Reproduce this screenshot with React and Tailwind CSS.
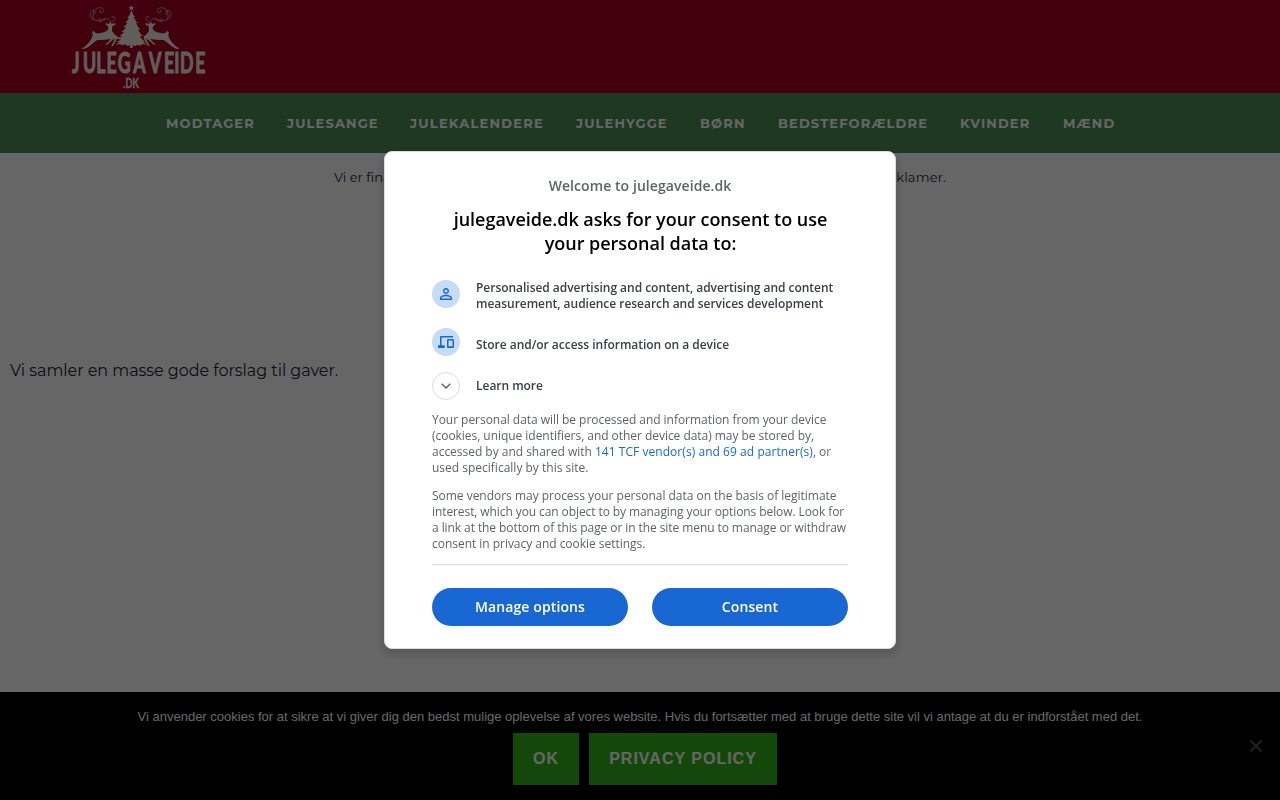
// src/App.jsx
import { MdPersonOutline } from 'react-icons/md';

const navItems = [
  { label: 'MODTAGER', className: 'w-[89px]' },
  { label: 'JULESANGE', className: 'w-[91px]' },
  { label: 'JULEKALENDERE', className: 'w-[134px] tracking-[1.25px]' },
  { label: 'JULEHYGGE', className: 'w-[92px]' },
  { label: 'BØRN', className: 'w-[46px]' },
  { label: 'BEDSTEFORÆLDRE', className: 'w-[150px]' },
  { label: 'KVINDER', className: 'w-[71px]' },
  { label: 'MÆND', className: 'w-[51px]' },
];

const Deer = () => (
  <>
    <path
      d="M138 69 L146 72 L150 67 L155 71 L167 70 L166 75 L157 78 L156 94 C162 99 166 107 173 110 C171 118 163 130 159 138 L154 139 C158 130 163 122 164 115 C158 120 147 129 141 135 L136 133 C143 127 150 121 152 116 C141 119 124 120 112 120 C102 125 96 134 86 140 C79 144 73 147 66 147 L67 144 C77 140 82 132 88 126 C94 118 98 111 98 102 L96 97 L101 92 C105 100 112 101 124 98 C137 96 146 92 145 80 L137 73 Z"
      fill="currentColor"
    />
    <path
      d="M151 68 C151 60 145 54 137 56 C130 58 126 66 120 65 C112 64 117 53 123 57 M137 57 C123 63 101 64 93 53 C86 43 92 31 101 32 C110 34 106 46 99 41 M101 58 C94 39 103 24 118 23 C133 23 134 38 124 38 C117 37 118 30 123 31 M153 67 C157 66 166 63 165 54 C163 45 153 49 157 55"
      fill="none"
      stroke="currentColor"
      strokeWidth="2.5"
      strokeOpacity="0.7"
    />
  </>
);

const Logo = () => (
  <svg viewBox="0 0 480 285" className="h-[95px] w-40 shrink-0 text-[#f0ebe1]">
    <Deer />
    <g transform="translate(423 0) scale(-1 1)">
      <Deer />
    </g>
    <path
      d="M214 15 L216 21 L222 21 L218 25 L220 31 L214 28 L208 31 L210 25 L206 21 L212 21 Z M214 30 L220 45 L225 50 L221 52 L229 65 L234 68 L228 70 L237 85 L242 88 L234 90 L244 104 L250 107 L239 109 L255 126 L250 126 L261 135 L247 132 L242 137 L233 134 L225 139 L218 136 L218 144 L210 144 L210 136 L203 138 L195 133 L186 136 L178 132 L166 134 L178 126 L168 126 L183 119 L170 116 L169 112 L188 112 L180 108 L192 97 L185 96 L198 83 L191 82 L203 69 L196 68 L207 56 L202 54 L209 45 Z"
      fill="currentColor"
    />
    <text
      x="58 111 175 225 280 354 431 503 553 581 654"
      y="218"
      transform="scale(0.62 1)"
      fill="currentColor"
      stroke="currentColor"
      strokeWidth="3"
      strokeLinejoin="round"
      className="font-['Lato'] text-[86px] font-bold"
    >
      JULEGAVEIDE
    </text>
    <text
      x="190"
      y="264"
      textLength="47"
      lengthAdjust="spacingAndGlyphs"
      fill="currentColor"
      stroke="currentColor"
      strokeWidth="1"
      className="font-['Lato'] text-[41px] font-bold"
    >
      .DK
    </text>
  </svg>
);

const DevicesIcon = () => (
  <svg viewBox="0 0 48 36" className="h-3 w-4" fill="currentColor">
    <path d="M9 0H45V4.5H10.5V28H20V36H0V28H6V3Q6 0 9 0ZM30 9H45Q48 9 48 12V33Q48 36 45 36H30Q27 36 27 33V12Q27 9 30 9ZM31.5 13.5V31H43.5V13.5Z" />
  </svg>
);

const ConsentButton = ({ children }) => (
  <button className="h-[38px] flex-1 rounded-full bg-[#1967d2] text-sm font-semibold tracking-[0.12px] text-white">
    {children}
  </button>
);

const ConsentDialog = () => (
  <div className="fixed inset-0 flex items-center justify-center bg-black/60 font-['Open_Sans',sans-serif]">
    <div className="h-[498px] w-lg rounded-lg border border-[#dadce0] bg-white px-[47px] pt-6 shadow-[0_4px_8px_2px_rgba(0,0,0,0.15)]">
      <p className="text-center text-sm leading-5 font-semibold tracking-[0.07px] text-[#5f6368]">
        Welcome to julegaveide.dk
      </p>
      <h1 className="mt-[11px] pl-px text-center text-lg leading-6 font-semibold tracking-[-0.02px] whitespace-nowrap text-black">
        julegaveide.dk asks for your consent to use
        <br />
        your personal data to:
      </h1>

      <ul className="mt-[25px] text-xs leading-4 font-semibold tracking-[-0.03px] text-[#3c4043]">
        <li className="flex h-12 items-start gap-4">
          <span className="flex size-7 shrink-0 items-center justify-center rounded-full bg-[#c6dbf5] text-[#1967d2]">
            <MdPersonOutline size={18} />
          </span>
          <span className="whitespace-nowrap">
            Personalised advertising and content, advertising and content
            <br />
            measurement, audience research and services development
          </span>
        </li>
        <li className="flex h-11 items-start gap-4">
          <span className="flex size-7 shrink-0 items-center justify-center rounded-full bg-[#c6dbf5] text-[#1967d2]">
            <DevicesIcon />
          </span>
          <span className="pt-[9px]">Store and/or access information on a device</span>
        </li>
        <li className="flex h-10 items-start gap-4">
          <span className="flex size-7 shrink-0 items-center justify-center rounded-full border border-[#dadce0] text-[#5f6368]">
            <svg viewBox="0 0 10 6" className="h-1.5 w-2.5" fill="none" stroke="currentColor" strokeWidth="1.4">
              <path d="M.7 .7 5 5 9.3 .7" />
            </svg>
          </span>
          <span className="pt-1.5">Learn more</span>
        </li>
      </ul>

      <div className="space-y-3 text-xs leading-4 whitespace-nowrap text-[#5f6368]">
        <p className="tracking-[-0.04px]">
          Your personal data will be processed and information from your device
          <br />
          (cookies, unique identifiers, and other device data) may be stored by,
          <br />
          <span className="tracking-[-0.02px]">accessed by and shared with </span>
          <a className="tracking-[0.05px] text-[#1967d2]">141 TCF vendor(s) and 69 ad partner(s)</a>, or
          <br />
          <span className="tracking-normal">used specifically by this site.</span>
        </p>
        <p>
          <span className="tracking-[-0.02px]">
            Some vendors may process your personal data on the basis of legitimate
          </span>
          <br />
          <span className="tracking-[-0.09px]">
            interest, which you can object to by managing your options below. Look for
          </span>
          <br />
          <span className="tracking-[-0.08px]">
            a link at the bottom of this page or in the site menu to manage or withdraw
          </span>
          <br />
          <span className="tracking-[-0.03px]">consent in privacy and cookie settings.</span>
        </p>
      </div>

      <div className="mt-3 flex gap-6 border-t border-[#dadce0] pt-[23px]">
        <ConsentButton>Manage options</ConsentButton>
        <ConsentButton>Consent</ConsentButton>
      </div>
    </div>
  </div>
);

const CookieBar = () => (
  <div className="flex h-[108px] items-center bg-black font-['Liberation_Sans',sans-serif] text-white">
    <div className="w-[30px]" />
    <div className="flex flex-1 flex-col items-center pb-px">
      <p className="text-[13px] leading-5 whitespace-nowrap">
        Vi anvender cookies for at sikre at vi giver dig den bedst mulige oplevelse af vores website. Hvis du fortsætter med at bruge dette site vil vi antage at du er indforstået med det.
      </p>
      <div className="mt-1.5 flex gap-2.5 pl-2.5 text-base font-bold tracking-[1px]">
        <button className="h-[52px] w-[66px] bg-[#32b519]">OK</button>
        <button className="h-[52px] w-[188px] bg-[#32b519]">PRIVACY POLICY</button>
      </div>
    </div>
    <button className="flex w-[30px] justify-start text-[#555]">
      <svg viewBox="0 0 12 12" className="size-3" stroke="currentColor" strokeWidth="2">
        <path d="M.5 .5 11.5 11.5M11.5 .5 .5 11.5" />
      </svg>
    </button>
  </div>
);

export default function App() {
  return (
    <div className="flex h-screen flex-col overflow-hidden bg-white font-['Montserrat','Inter',sans-serif] text-[#25253a]">
      <header className="flex h-[93px] shrink-0 items-start bg-[#a60020] pl-[60px]">
        <Logo />
      </header>
      <nav className="flex h-[60px] shrink-0 items-center justify-center gap-8 bg-[#4e8c53] pt-0.5 text-[13px] font-bold tracking-[1.15px] text-white">
        {navItems.map((item) => (
          <a key={item.label} className={`whitespace-nowrap ${item.className}`}>
            {item.label}
          </a>
        ))}
      </nav>
      <main className="flex-1">
        <p className="mx-auto mt-3.5 flex w-[612px] justify-between text-[13px] leading-5">
          <span>Vi er finansieret af annoncer</span>
          <span className="tracking-[0.2px]">og reklamer.</span>
        </p>
        <p className="mt-[172px] pl-2.5 text-base leading-6 tracking-[-0.05px]">
          Vi samler en masse gode forslag til gaver.
        </p>
      </main>
      <CookieBar />
      <ConsentDialog />
    </div>
  );
}
